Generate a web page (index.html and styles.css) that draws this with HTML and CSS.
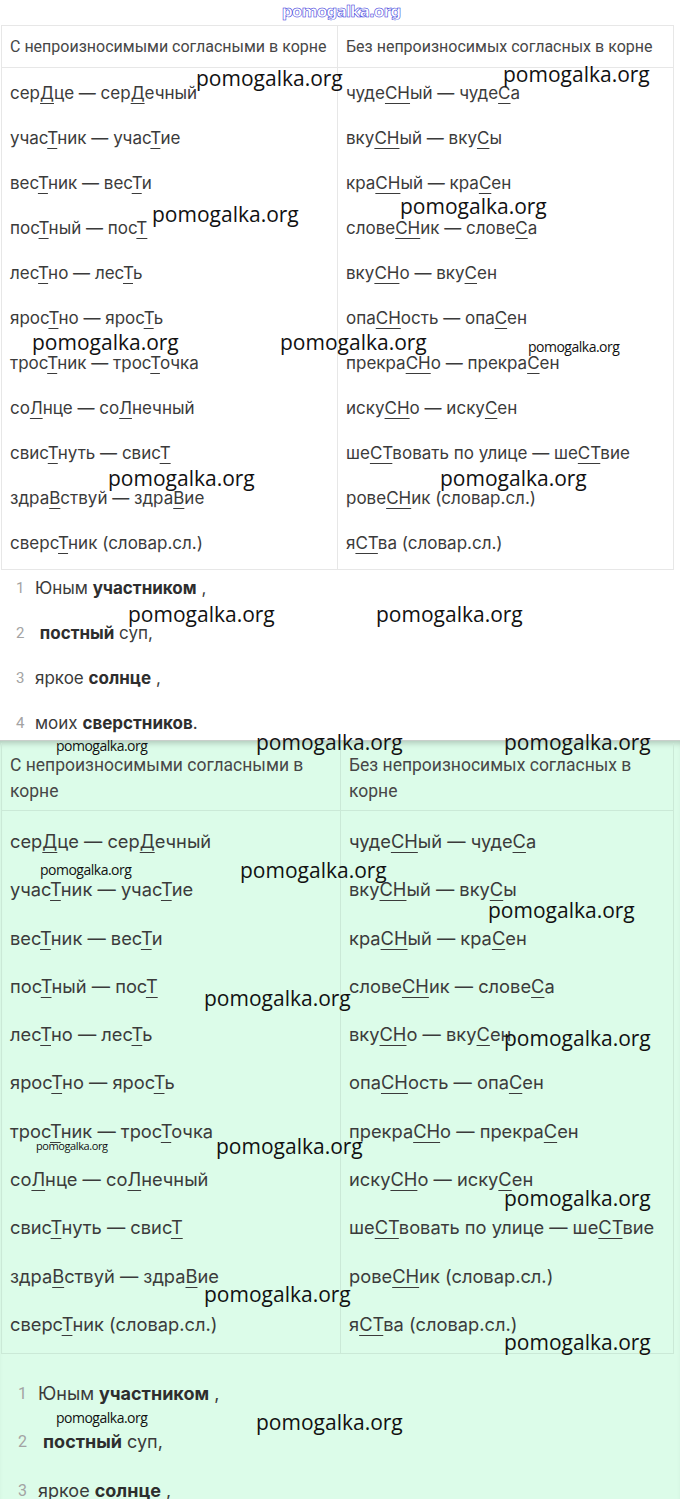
FILE: index.html
```html
<!DOCTYPE html>
<html lang="ru">
<head>
<meta charset="utf-8">
<title>pomogalka.org</title>
<link rel="stylesheet" href="styles.css">
</head>
<body>
<div class="page">
  <header class="site-logo">pomogalka.org</header>

  <section class="panel panel-white">
    <table class="rules">
      <colgroup><col class="c1"><col class="c2"></colgroup>
      <thead>
        <tr><th>С непроизносимыми согласными в корне</th><th>Без непроизносимых согласных в корне</th></tr>
      </thead>
      <tbody>
        <tr><td>сер<u>Д</u>це — сер<u>Д</u>ечный</td><td>чуде<u>СН</u>ый — чуде<u>С</u>а</td></tr>
        <tr><td>учас<u>Т</u>ник — учас<u>Т</u>ие</td><td>вку<u>СН</u>ый — вку<u>С</u>ы</td></tr>
        <tr><td>вес<u>Т</u>ник — вес<u>Т</u>и</td><td>кра<u>СН</u>ый — кра<u>С</u>ен</td></tr>
        <tr><td>пос<u>Т</u>ный — пос<u>Т</u></td><td>слове<u>СН</u>ик — слове<u>С</u>а</td></tr>
        <tr><td>лес<u>Т</u>но — лес<u>Т</u>ь</td><td>вку<u>СН</u>о — вку<u>С</u>ен</td></tr>
        <tr><td>ярос<u>Т</u>но — ярос<u>Т</u>ь</td><td>опа<u>СН</u>ость — опа<u>С</u>ен</td></tr>
        <tr><td>трос<u>Т</u>ник — трос<u>Т</u>очка</td><td>прекра<u>СН</u>о — прекра<u>С</u>ен</td></tr>
        <tr><td>со<u>Л</u>нце — со<u>Л</u>нечный</td><td>иску<u>СН</u>о — иску<u>С</u>ен</td></tr>
        <tr><td>свис<u>Т</u>нуть — свис<u>Т</u></td><td>ше<u>СТ</u>вовать по улице — ше<u>СТ</u>вие</td></tr>
        <tr><td>здра<u>В</u>ствуй — здра<u>В</u>ие</td><td>рове<u>СН</u>ик (словар.сл.)</td></tr>
        <tr><td>сверс<u>Т</u>ник (словар.сл.)</td><td>я<u>СТ</u>ва (словар.сл.)</td></tr>
      </tbody>
    </table>
    <ol class="answers">
      <li><span class="num">1</span><span>Юным <b>участником</b> ,</span></li>
      <li><span class="num">2</span><span>&nbsp;<b>постный</b> суп,</span></li>
      <li><span class="num">3</span><span>яркое <b>солнце</b> ,</span></li>
      <li><span class="num">4</span><span>моих <b>сверстников</b>.</span></li>
    </ol>
  </section>

  <section class="panel panel-green">
    <table class="rules">
      <colgroup><col class="c1"><col class="c2"></colgroup>
      <thead>
        <tr><th>С непроизносимыми согласными в корне</th><th>Без непроизносимых согласных в корне</th></tr>
      </thead>
      <tbody>
        <tr><td>сер<u>Д</u>це — сер<u>Д</u>ечный</td><td>чуде<u>СН</u>ый — чуде<u>С</u>а</td></tr>
        <tr><td>учас<u>Т</u>ник — учас<u>Т</u>ие</td><td>вку<u>СН</u>ый — вку<u>С</u>ы</td></tr>
        <tr><td>вес<u>Т</u>ник — вес<u>Т</u>и</td><td>кра<u>СН</u>ый — кра<u>С</u>ен</td></tr>
        <tr><td>пос<u>Т</u>ный — пос<u>Т</u></td><td>слове<u>СН</u>ик — слове<u>С</u>а</td></tr>
        <tr><td>лес<u>Т</u>но — лес<u>Т</u>ь</td><td>вку<u>СН</u>о — вку<u>С</u>ен</td></tr>
        <tr><td>ярос<u>Т</u>но — ярос<u>Т</u>ь</td><td>опа<u>СН</u>ость — опа<u>С</u>ен</td></tr>
        <tr><td>трос<u>Т</u>ник — трос<u>Т</u>очка</td><td>прекра<u>СН</u>о — прекра<u>С</u>ен</td></tr>
        <tr><td>со<u>Л</u>нце — со<u>Л</u>нечный</td><td>иску<u>СН</u>о — иску<u>С</u>ен</td></tr>
        <tr><td>свис<u>Т</u>нуть — свис<u>Т</u></td><td>ше<u>СТ</u>вовать по улице — ше<u>СТ</u>вие</td></tr>
        <tr><td>здра<u>В</u>ствуй — здра<u>В</u>ие</td><td>рове<u>СН</u>ик (словар.сл.)</td></tr>
        <tr><td>сверс<u>Т</u>ник (словар.сл.)</td><td>я<u>СТ</u>ва (словар.сл.)</td></tr>
      </tbody>
    </table>
    <ol class="answers">
      <li><span class="num">1</span><span>Юным <b>участником</b> ,</span></li>
      <li><span class="num">2</span><span>&nbsp;<b>постный</b> суп,</span></li>
      <li><span class="num">3</span><span>яркое <b>солнце</b> ,</span></li>
    </ol>
  </section>

  <div class="wm w1">pomogalka.org</div>
  <div class="wm w2">pomogalka.org</div>
  <div class="wm w3">pomogalka.org</div>
  <div class="wm w4">pomogalka.org</div>
  <div class="wm w5">pomogalka.org</div>
  <div class="wm w6">pomogalka.org</div>
  <div class="wm sm w7">pomogalka.org</div>
  <div class="wm w8">pomogalka.org</div>
  <div class="wm w9">pomogalka.org</div>
  <div class="wm w10">pomogalka.org</div>
  <div class="wm w11">pomogalka.org</div>
  <div class="wm sm w12">pomogalka.org</div>
  <div class="wm w13">pomogalka.org</div>
  <div class="wm w14">pomogalka.org</div>
  <div class="wm sm w15">pomogalka.org</div>
  <div class="wm w16">pomogalka.org</div>
  <div class="wm w17">pomogalka.org</div>
  <div class="wm w18">pomogalka.org</div>
  <div class="wm w19">pomogalka.org</div>
  <div class="wm xs w20">pomogalka.org</div>
  <div class="wm w21">pomogalka.org</div>
  <div class="wm w22">pomogalka.org</div>
  <div class="wm w23">pomogalka.org</div>
  <div class="wm w24">pomogalka.org</div>
  <div class="wm sm w25">pomogalka.org</div>
  <div class="wm w26">pomogalka.org</div>
</div>
</body>
</html>
```

FILE: styles.css
```css
* { box-sizing: border-box; }

body {
  margin: 0;
  background: #ffffff;
}

.page {
  position: relative;
  width: 680px;
  height: 1499px;
  overflow: hidden;
  font-family: Inter, "Noto Sans", sans-serif;
  color: #3b3b3b;
}

.site-logo {
  height: 25px;
  line-height: 24px;
  text-align: center;
  font-family: "DejaVu Sans", sans-serif;
  font-weight: 700;
  font-size: 15.5px;
  letter-spacing: -1px;
  color: #ffffff;
  -webkit-text-stroke: 0.5px #1f1fd8;
  padding-left: 2px;
}

/* ---------- tables ---------- */
.rules {
  border-collapse: collapse;
  table-layout: fixed;
  margin-left: 1px;
}

.rules th,
.rules td {
  text-align: left;
  vertical-align: middle;
  white-space: nowrap;
  border-left: 1px solid #e7e7e7;
  border-right: 1px solid #e7e7e7;
}

.rules th {
  font-family: Roboto, sans-serif;
  font-weight: 400;
  color: #474747;
  border-top: 1px solid #e7e7e7;
  border-bottom: 1px solid #e7e7e7;
}

.rules u {
  text-decoration: underline;
  text-decoration-thickness: 1px;
  text-underline-offset: 4px;
  text-decoration-skip-ink: none;
}

/* white panel */
.panel-white {
  height: 715px;
  background: #ffffff;
}

.panel-white .rules { width: 672px; }
.panel-white .rules .c1 { width: 336px; }
.panel-white .rules .c2 { width: 336px; }

.panel-white .rules th {
  height: 42px;
  padding: 0 8px;
  font-size: 16px;
  line-height: 40px;
}

.panel-white .rules td {
  padding: 0 8px;
  font-size: 17px;
  line-height: 45px;
}

.panel-white .rules tbody tr:first-child td { padding-top: 3px; }
.panel-white .rules tbody tr:last-child td {
  padding-bottom: 3px;
  border-bottom: 1px solid #e7e7e7;
}

/* green panel */
.panel-green {
  height: 759px;
  background: #dcfce9;
  border-top: 1px solid #c9cfcb;
  box-shadow: inset 0 6px 6px -4px rgba(0, 0, 0, 0.22);
  padding-top: 2px;
}

.panel-green .rules { width: 672px; }
.panel-green .rules .c1 { width: 339px; }
.panel-green .rules .c2 { width: 333px; }

.panel-green .rules th,
.panel-green .rules td {
  border-color: #cbe9d7;
}

.panel-green .rules th {
  white-space: normal;
  padding: 8px 8px 6px;
  font-size: 17.5px;
  line-height: 26px;
  border-top-color: transparent;
}

.panel-green .rules td {
  padding: 0 8px;
  font-size: 18.3px;
  line-height: 48.3px;
}

.panel-green .rules tbody tr:first-child td { padding-top: 6px; }
.panel-green .rules tbody tr:last-child td {
  padding-bottom: 5px;
  border-bottom: 1px solid #cbe9d7;
}

/* ---------- answer lists ---------- */
.answers {
  list-style: none;
  margin: 0;
  display: flex;
  flex-direction: column;
}

.answers li {
  display: flex;
  align-items: center;
}

.answers .num {
  font-family: Roboto, sans-serif;
  color: #a3a3a3;
}

.answers b { font-weight: 700; color: #2e2e2e; }

.panel-white .answers {
  padding: 7px 0 0 16px;
  gap: 23px;
  font-size: 17px;
}
.panel-white .answers li { height: 22px; }
.panel-white .answers .num { width: 19px; font-size: 15px; }

.panel-green .answers {
  padding: 27px 0 0 18px;
  gap: 24.5px;
  font-size: 18px;
}
.panel-green .answers li { height: 24px; }
.panel-green .answers .num { width: 20px; font-size: 16px; }

/* ---------- watermarks (overlay) ---------- */
.wm {
  position: absolute;
  font-family: "Open Sans", sans-serif;
  font-size: 21px;
  line-height: 28px;
  color: #111111;
  white-space: nowrap;
}

.wm.sm {
  font-size: 14px;
  line-height: 20px;
  letter-spacing: -0.5px;
}

.wm.xs {
  font-size: 11px;
  line-height: 14px;
  letter-spacing: -0.4px;
}

.w1  { left: 196px; top: 64px; }
.w2  { left: 503px; top: 60px; }
.w3  { left: 152px; top: 200px; }
.w4  { left: 400px; top: 192px; }
.w5  { left: 32px;  top: 328px; }
.w6  { left: 280px; top: 328px; }
.w7  { left: 528px; top: 337px; }
.w8  { left: 108px; top: 464px; }
.w9  { left: 440px; top: 464px; }
.w10 { left: 128px; top: 600px; }
.w11 { left: 376px; top: 600px; }
.w12 { left: 56px;  top: 736px; }
.w13 { left: 256px; top: 728px; }
.w14 { left: 504px; top: 728px; }
.w15 { left: 40px;  top: 860px; }
.w16 { left: 240px; top: 856px; }
.w17 { left: 488px; top: 896px; }
.w18 { left: 204px; top: 984px; }
.w19 { left: 504px; top: 1024px; }
.w20 { left: 36px;  top: 1139px; }
.w21 { left: 216px; top: 1132px; }
.w22 { left: 504px; top: 1184px; }
.w23 { left: 204px; top: 1280px; }
.w24 { left: 504px; top: 1328px; }
.w25 { left: 56px;  top: 1408px; }
.w26 { left: 256px; top: 1408px; }
```
